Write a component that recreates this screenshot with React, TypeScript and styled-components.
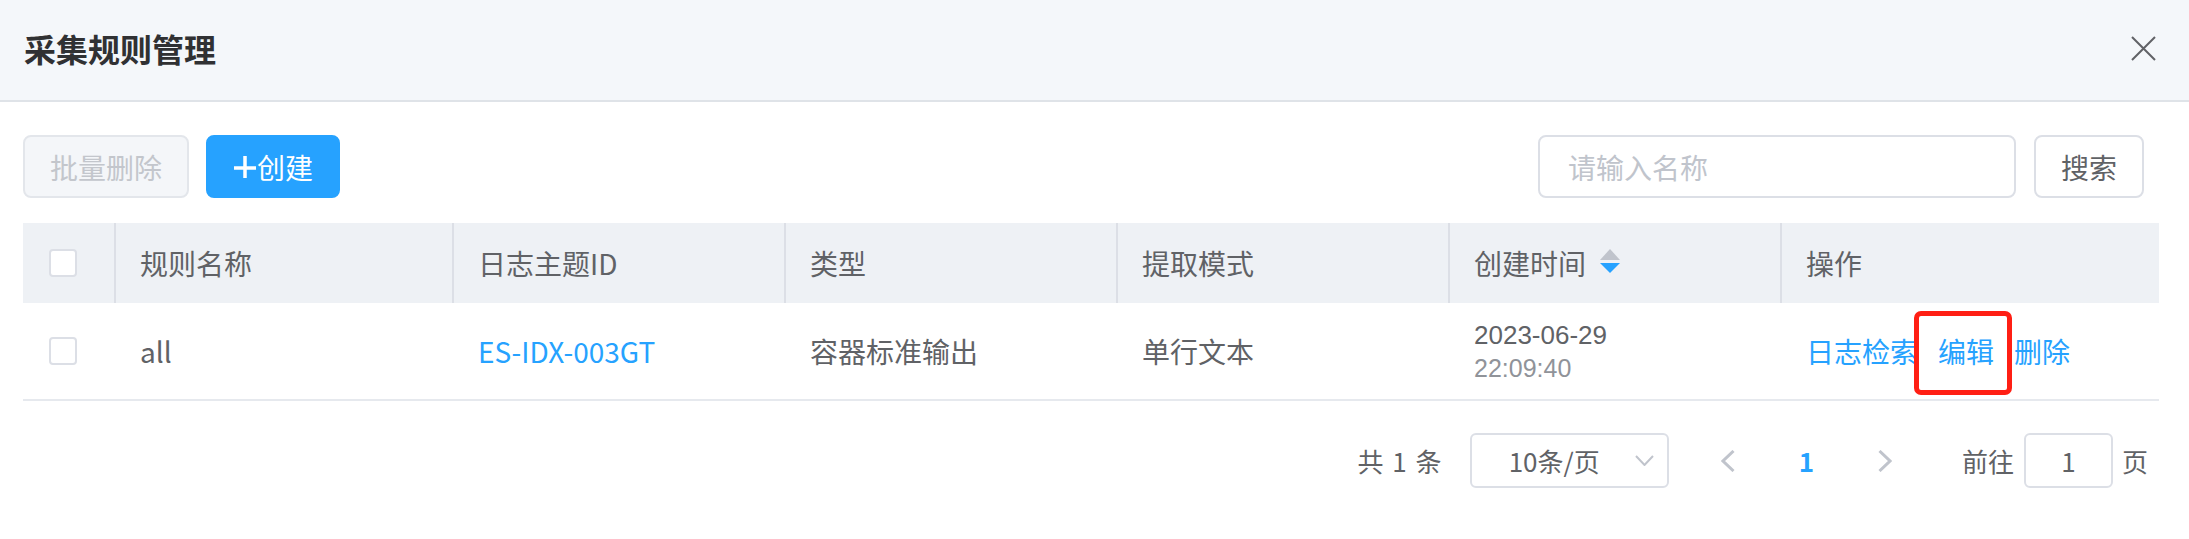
import React from 'react';
import styled, { createGlobalStyle } from 'styled-components';

const GlobalStyle = createGlobalStyle`
  html, body { margin: 0; padding: 0; background: #ffffff; }
  body {
    font-family: "Noto Sans CJK SC", "Noto Sans", sans-serif;
    color: #606266;
  }
  * { box-sizing: border-box; }
`;

const Page = styled.div`
  width: 2189px;
  height: 539px;
  background: #ffffff;
  overflow: hidden;
`;

const Header = styled.header`
  height: 102px;
  background: #f4f7fa;
  border-bottom: 2px solid #dfe3e8;
  display: flex;
  align-items: center;
  justify-content: space-between;
  padding: 0 33px 4px 24px;
`;

const Title = styled.h1`
  margin: 0;
  font-size: 32px;
  line-height: 1;
  font-weight: 700;
  color: #303133;
`;

const CloseButton = styled.button`
  border: none;
  background: transparent;
  padding: 0;
  width: 25px;
  height: 25px;
  display: flex;
  cursor: pointer;
`;

const Body = styled.main`
  padding: 33px 30px 0 23px;
`;

const Toolbar = styled.div`
  height: 63px;
  display: flex;
  align-items: center;
  justify-content: space-between;
  padding-right: 15px;
`;

const Group = styled.div<{ $gap: number }>`
  display: flex;
  align-items: center;
  gap: ${(p) => p.$gap}px;
`;

const Button = styled.button<{ $variant?: 'primary' | 'disabled' | 'default' }>`
  height: 63px;
  padding: 0 25px;
  border-radius: 8px;
  font-family: inherit;
  font-size: 28px;
  line-height: 1;
  display: flex;
  align-items: center;
  gap: 1px;
  cursor: ${(p) => (p.$variant === 'disabled' ? 'not-allowed' : 'pointer')};
  border: 2px solid
    ${(p) =>
      p.$variant === 'primary' ? '#26a2ff' : p.$variant === 'disabled' ? '#e3e6eb' : '#dcdfe6'};
  background: ${(p) =>
    p.$variant === 'primary' ? '#26a2ff' : p.$variant === 'disabled' ? '#f4f6f9' : '#ffffff'};
  color: ${(p) =>
    p.$variant === 'primary' ? '#ffffff' : p.$variant === 'disabled' ? '#c3c6cc' : '#606266'};
`;

const PrimaryButton = styled(Button)`
  padding: 0 25px 0 26px;
`;

const SearchInput = styled.input`
  width: 478px;
  height: 63px;
  border: 2px solid #dcdfe6;
  border-radius: 8px;
  padding: 0 28px;
  font-family: inherit;
  font-size: 28px;
  color: #606266;
  outline: none;
  &::placeholder { color: #c0c4cc; }
`;

const Table = styled.div`
  margin-top: 25px;
  width: 2136px;
`;

const Row = styled.div<{ $head?: boolean }>`
  display: grid;
  grid-template-columns: 91px 338px 332px 332px 332px 332px 1fr;
  height: ${(p) => (p.$head ? '80px' : '98px')};
  background: ${(p) => (p.$head ? '#eef1f5' : '#ffffff')};
  border-bottom: ${(p) => (p.$head ? 'none' : '2px solid #e6e9ee')};
`;

const Cell = styled.div<{ $head?: boolean; $first?: boolean }>`
  display: flex;
  align-items: center;
  padding: ${(p) => (p.$first ? '0 0 0 26px' : '0 24px')};
  border-left: ${(p) => (p.$head && !p.$first ? '2px solid #dcdfe6' : p.$first ? 'none' : '2px solid transparent')};
  font-size: 28px;
  line-height: 40px;
  color: #606266;
  white-space: nowrap;
`;

const Checkbox = styled.span`
  width: 28px;
  height: 28px;
  border: 2px solid #dcdfe6;
  border-radius: 4px;
  background: #ffffff;
  display: inline-block;
`;

const Link = styled.a`
  color: #26a2ff;
  text-decoration: none;
  cursor: pointer;
`;

const SortIcon = styled.svg`
  margin-left: 14px;
  margin-top: -3px;
`;

const DateBlock = styled.div`
  display: flex;
  flex-direction: column;
  margin-top: 2px;
  font-family: "Liberation Sans", Arial, sans-serif;
`;

const DateLine = styled.span<{ $muted?: boolean }>`
  display: block;
  height: 33px;
  line-height: 33px;
  color: ${(p) => (p.$muted ? '#909399' : '#606266')};
  font-size: ${(p) => (p.$muted ? '25px' : '26px')};
`;

const Actions = styled.div`
  display: flex;
  align-items: center;
  gap: 20px;
`;

const ActionLink = styled.a<{ $marked?: boolean }>`
  position: relative;
  color: #26a2ff;
  font-size: 28px;
  line-height: 40px;
  cursor: pointer;
  ${(p) =>
    p.$marked
      ? `
    &::after {
      content: '';
      position: absolute;
      left: -24px;
      right: -18px;
      top: -20px;
      bottom: -24px;
      border: 5px solid #ff1f14;
      border-radius: 7px;
      pointer-events: none;
    }
  `
      : ''}
`;

const Pagination = styled.div`
  margin-top: 32px;
  height: 55px;
  display: flex;
  align-items: center;
  justify-content: flex-end;
  padding-right: 11px;
  font-size: 26px;
  color: #606266;
`;

const Total = styled.span`
  margin-right: 28px;
  word-spacing: 3px;
`;

const SizeSelect = styled.div`
  width: 199px;
  height: 55px;
  border: 2px solid #dcdfe6;
  border-radius: 6px;
  display: flex;
  align-items: center;
  justify-content: space-between;
  padding: 0 13px 0 37px;
  font-size: 26px;
`;

const NavArrow = styled.svg<{ $ml: number }>`
  margin-left: ${(p) => p.$ml}px;
`;

const PageNum = styled.span<{ $ml: number }>`
  margin-left: ${(p) => p.$ml}px;
  color: #26a2ff;
  font-weight: 700;
  font-size: 26px;
`;

const JumpLabel = styled.span<{ $ml: number }>`
  margin-left: ${(p) => p.$ml}px;
`;

const JumpInput = styled.div`
  width: 89px;
  height: 55px;
  margin: 0 9px 0 10px;
  border: 2px solid #dcdfe6;
  border-radius: 6px;
  display: flex;
  align-items: center;
  justify-content: center;
  font-size: 26px;
`;

const columns = ['规则名称', '日志主题ID', '类型', '提取模式', '创建时间', '操作'];

export default function App() {
  return (
    <Page>
      <GlobalStyle />
      <Header>
        <Title>采集规则管理</Title>
        <CloseButton aria-label="关闭">
          <svg width="25" height="25" viewBox="0 0 25 25">
            <path d="M1 1 L24 24 M24 1 L1 24" stroke="#606266" strokeWidth="2" fill="none" />
          </svg>
        </CloseButton>
      </Header>
      <Body>
        <Toolbar>
          <Group $gap={17}>
            <Button $variant="disabled">批量删除</Button>
            <PrimaryButton $variant="primary">
              <svg width="22" height="24" viewBox="0 0 22 24">
                <path d="M11 1 V23 M0 13 H22" stroke="#ffffff" strokeWidth="3.5" fill="none" />
              </svg>
              创建
            </PrimaryButton>
          </Group>
          <Group $gap={18}>
            <SearchInput placeholder="请输入名称" />
            <Button $variant="default">搜索</Button>
          </Group>
        </Toolbar>
        <Table>
          <Row $head>
            <Cell $head $first>
              <Checkbox />
            </Cell>
            {columns.map((c) => (
              <Cell $head key={c}>
                {c}
                {c === '创建时间' && (
                  <SortIcon width="20" height="25" viewBox="0 0 20 25">
                    <path d="M10 0 L20 11 L0 11 Z" fill="#c0c4cc" />
                    <path d="M0 14 L20 14 L10 24 Z" fill="#26a2ff" />
                  </SortIcon>
                )}
              </Cell>
            ))}
          </Row>
          <Row>
            <Cell $first>
              <Checkbox />
            </Cell>
            <Cell>all</Cell>
            <Cell>
              <Link>ES-IDX-003GT</Link>
            </Cell>
            <Cell>容器标准输出</Cell>
            <Cell>单行文本</Cell>
            <Cell>
              <DateBlock>
                <DateLine>2023-06-29</DateLine>
                <DateLine $muted>22:09:40</DateLine>
              </DateBlock>
            </Cell>
            <Cell>
              <Actions>
                <ActionLink>日志检索</ActionLink>
                <ActionLink $marked>编辑</ActionLink>
                <ActionLink>删除</ActionLink>
              </Actions>
            </Cell>
          </Row>
        </Table>
        <Pagination>
          <Total>共 1 条</Total>
          <SizeSelect>
            <span>10条/页</span>
            <svg width="19" height="11" viewBox="0 0 19 11">
              <path d="M1 1 L9.5 10 L18 1" stroke="#c0c4cc" strokeWidth="2" fill="none" />
            </svg>
          </SizeSelect>
          <NavArrow $ml={52} width="14" height="22" viewBox="0 0 14 22">
            <path d="M12.5 1 L2 11 L12.5 21" stroke="#c0c4cc" strokeWidth="3" fill="none" />
          </NavArrow>
          <PageNum $ml={64}>1</PageNum>
          <NavArrow $ml={64} width="14" height="22" viewBox="0 0 14 22">
            <path d="M1.5 1 L12 11 L1.5 21" stroke="#c0c4cc" strokeWidth="3" fill="none" />
          </NavArrow>
          <JumpLabel $ml={70}>前往</JumpLabel>
          <JumpInput>1</JumpInput>
          <span>页</span>
        </Pagination>
      </Body>
    </Page>
  );
}
